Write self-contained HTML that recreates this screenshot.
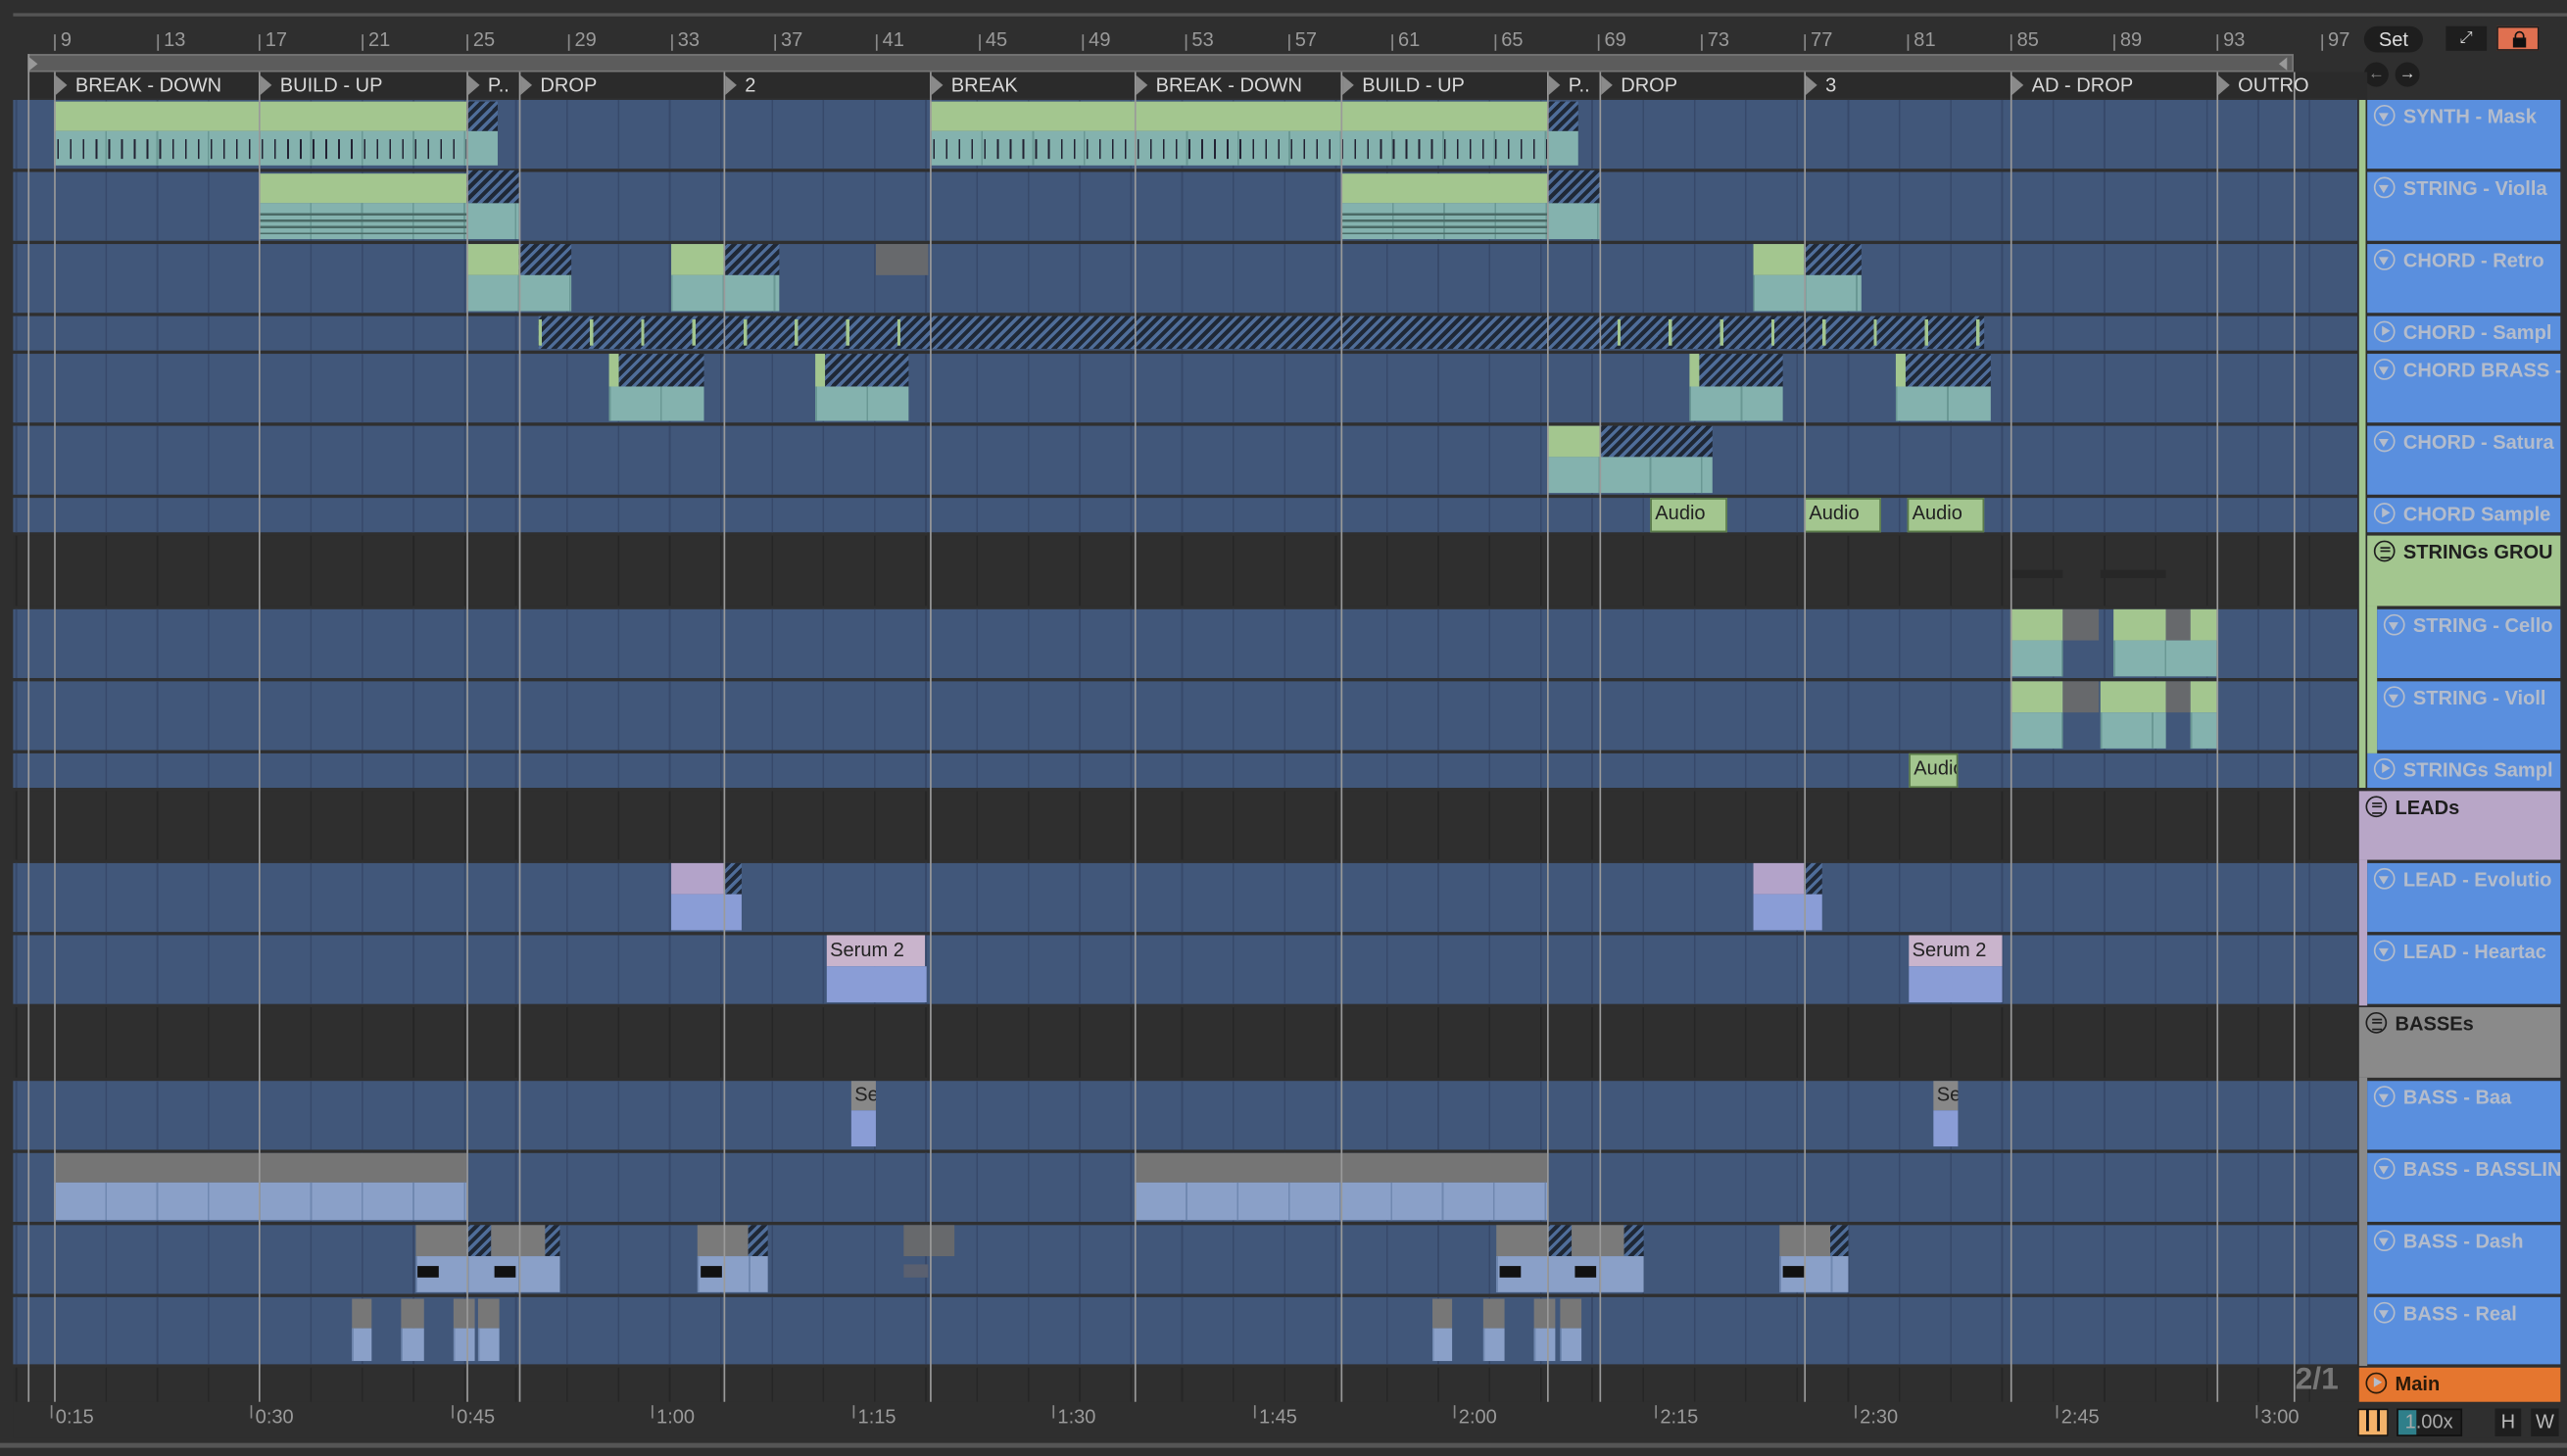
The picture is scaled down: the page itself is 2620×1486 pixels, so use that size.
<!DOCTYPE html>
<html><head><meta charset="utf-8"><style>
*{margin:0;padding:0;box-sizing:border-box}
html,body{width:2620px;height:1486px;overflow:hidden;background:#2a2a2a}
#w{position:absolute;left:0;top:0;width:1568px;height:889px;transform-origin:0 0;transform:scale(1.67092,1.67154);background:#2f2f2f;font-family:"Liberation Sans",sans-serif;overflow:hidden}
.a{position:absolute}
.lane{position:absolute;left:8px;width:1432px;background-color:#41577a;background-image:repeating-linear-gradient(90deg,#37496a 0 1px,transparent 1px 31.3px);background-position:25px 0}
.dk{background-color:#2f2f2f;background-image:repeating-linear-gradient(90deg,#262626 0 1px,transparent 1px 31.3px)}
.g{position:absolute;background:#a3c68f}
.t{position:absolute;background-color:#84b2ae;background-image:repeating-linear-gradient(90deg,#6a9894 0 1px,transparent 1px 31.3px)}
.h{position:absolute;background:repeating-linear-gradient(-45deg,#1f2836 0 2.5px,#4f6d99 2.5px 4.5px)}
.gr{position:absolute;background:#67696c}
.hd{position:absolute;left:1446px;width:118px;background:#5a8fde;color:#b4bccb;font-weight:bold;font-size:12px;padding:3px 0 0 22px;white-space:nowrap;overflow:hidden}
.hd i{position:absolute;left:4px;top:3px;width:13px;height:13px;border:1.3px solid #b4bccb;border-radius:50%}
.hd i:after{content:"";position:absolute;left:2px;top:3.5px;border-left:3.5px solid transparent;border-right:3.5px solid transparent;border-top:5px solid #b4bccb}
.hd i.p:after{left:3.5px;top:2px;border-top:3.5px solid transparent;border-bottom:3.5px solid transparent;border-left:5px solid #b4bccb;border-right:0}
.hd i.m:after{content:"";left:2.5px;top:2.5px;width:6px;height:5px;border:0;border-top:1.3px solid #1e1e1e;border-bottom:1.3px solid #1e1e1e;background:linear-gradient(#1e1e1e,#1e1e1e) center/100% 1.3px no-repeat}
.loc{position:absolute;top:44px;width:1px;height:812px;background:#9a9a9a}
.lb{position:absolute;top:45px;color:#d8d8d8;font-size:12px;padding-left:13px;white-space:nowrap}
.lb:before{content:"";position:absolute;left:1px;top:1px;border-top:6px solid transparent;border-bottom:6px solid transparent;border-left:7px solid #8a8a8a}
.rn{position:absolute;top:17px;color:#9a9a9a;font-size:12px;padding-left:4px}
.rn:before{content:"";position:absolute;left:0;top:4px;width:1px;height:10px;background:#888}
.tm{position:absolute;top:858px;color:#9a9a9a;font-size:12px;padding-left:3px}
.tm:before{content:"";position:absolute;left:0;top:0;width:1px;height:8px;background:#888}
.au{position:absolute;background:#a3c68f;border:1px solid #5a7a4a;color:#222;font-size:12px;padding:1px 0 0 2px;height:21px;overflow:hidden}
.pu{position:absolute;background:#b3a3c9}
.bl{position:absolute;background:#8a9dd6}
.lb2{position:absolute;background-color:#8aa0c8;background-image:repeating-linear-gradient(90deg,#7088b0 0 1px,transparent 1px 31.3px)}
</style></head><body><div id="w">
<div class="a" style="left:8px;top:8px;width:1560px;height:2px;background:#555"></div>
<div class="a" style="left:17px;top:33px;width:1384px;height:11px;background:#5c5c5c;border:1px solid #777"></div>
<div class="a" style="left:17px;top:44px;width:1423px;height:16px;background:#2b2b2b"></div>
<div class="a" style="left:18px;top:35px;border-top:4px solid transparent;border-bottom:4px solid transparent;border-left:5px solid #999"></div>
<div class="a" style="left:1392px;top:35px;border-top:4px solid transparent;border-bottom:4px solid transparent;border-right:5px solid #999"></div>
<div class="rn" style="left:33px">9</div><div class="rn" style="left:96px">13</div><div class="rn" style="left:158px">17</div><div class="rn" style="left:221px">21</div><div class="rn" style="left:285px">25</div><div class="rn" style="left:347px">29</div><div class="rn" style="left:410px">33</div><div class="rn" style="left:473px">37</div><div class="rn" style="left:535px">41</div><div class="rn" style="left:598px">45</div><div class="rn" style="left:661px">49</div><div class="rn" style="left:724px">53</div><div class="rn" style="left:787px">57</div><div class="rn" style="left:850px">61</div><div class="rn" style="left:913px">65</div><div class="rn" style="left:976px">69</div><div class="rn" style="left:1039px">73</div><div class="rn" style="left:1102px">77</div><div class="rn" style="left:1165px">81</div><div class="rn" style="left:1228px">85</div><div class="rn" style="left:1291px">89</div><div class="rn" style="left:1354px">93</div><div class="rn" style="left:1418px">97</div>
<div class="a" style="left:1444px;top:16px;width:36px;height:16px;border-radius:8px;background:#1e1e1e;color:#ddd;font-size:12px;text-align:center;line-height:16px">Set</div>
<div class="a" style="left:1494px;top:16px;width:25px;height:15px;background:#1e1e1e;color:#ddd;font-size:10px;text-align:center;line-height:15px">⤢</div>
<div class="a" style="left:1525px;top:16px;width:26px;height:15px;background:#e07050;border:1px solid #1e1e1e"><div class="a" style="left:9px;top:6px;width:8px;height:6px;background:#111"></div><div class="a" style="left:10px;top:2px;width:6px;height:6px;border:1.5px solid #111;border-radius:3px 3px 0 0"></div></div>
<div class="a" style="left:1444px;top:38px;width:15px;height:15px;border-radius:50%;background:#1e1e1e;color:#888;font-size:10px;text-align:center;line-height:15px">←</div>
<div class="a" style="left:1463px;top:38px;width:15px;height:15px;border-radius:50%;background:#1e1e1e;color:#ddd;font-size:10px;text-align:center;line-height:15px">→</div>
<div class="lane" style="top:61px;height:42px"></div>
<div class="lane" style="top:105px;height:42px"></div>
<div class="lane" style="top:149px;height:42px"></div>
<div class="lane" style="top:193px;height:21px"></div>
<div class="lane" style="top:216px;height:42px"></div>
<div class="lane" style="top:260px;height:42px"></div>
<div class="lane" style="top:304px;height:21px"></div>
<div class="lane dk" style="top:327px;height:43px"></div>
<div class="lane" style="top:372px;height:42px"></div>
<div class="lane" style="top:416px;height:42px"></div>
<div class="lane" style="top:460px;height:21px"></div>
<div class="lane dk" style="top:483px;height:42px"></div>
<div class="lane" style="top:527px;height:42px"></div>
<div class="lane" style="top:571px;height:42px"></div>
<div class="lane dk" style="top:615px;height:43px"></div>
<div class="lane" style="top:660px;height:42px"></div>
<div class="lane" style="top:704px;height:42px"></div>
<div class="lane" style="top:748px;height:42px"></div>
<div class="lane" style="top:792px;height:41px"></div>
<div class="lane dk" style="top:835px;height:21px"></div>
<div class="g" style="left:33px;top:62px;width:252px;height:18px"></div>
<div class="t" style="left:33px;top:80px;width:271px;height:21px"></div>
<div class="a" style="left:35px;top:85px;width:250px;height:12px;background:repeating-linear-gradient(90deg,#223 0 1px,transparent 1px 7.8px)"></div>
<div class="h" style="left:285px;top:62px;width:19px;height:18px"></div>
<div class="g" style="left:568px;top:62px;width:377px;height:18px"></div>
<div class="t" style="left:568px;top:80px;width:396px;height:21px"></div>
<div class="a" style="left:570px;top:85px;width:375px;height:12px;background:repeating-linear-gradient(90deg,#223 0 1px,transparent 1px 7.8px)"></div>
<div class="h" style="left:945px;top:62px;width:19px;height:18px"></div>
<div class="g" style="left:158px;top:106px;width:127px;height:18px"></div>
<div class="t" style="left:158px;top:124px;width:159px;height:22px"></div>
<div class="a" style="left:158px;top:130px;width:127px;height:13px;background:repeating-linear-gradient(180deg,#4a6a66 0 1.5px,transparent 1.5px 4px)"></div>
<div class="h" style="left:285px;top:104px;width:32px;height:20px"></div>
<div class="g" style="left:819px;top:106px;width:126px;height:18px"></div>
<div class="t" style="left:819px;top:124px;width:158px;height:22px"></div>
<div class="a" style="left:819px;top:130px;width:126px;height:13px;background:repeating-linear-gradient(180deg,#4a6a66 0 1.5px,transparent 1.5px 4px)"></div>
<div class="h" style="left:945px;top:104px;width:32px;height:20px"></div>
<div class="g" style="left:285px;top:149px;width:32px;height:19px"></div><div class="h" style="left:317px;top:149px;width:32px;height:19px"></div><div class="t" style="left:285px;top:168px;width:64px;height:22px"></div>
<div class="g" style="left:410px;top:149px;width:32px;height:19px"></div><div class="h" style="left:442px;top:149px;width:34px;height:19px"></div><div class="t" style="left:410px;top:168px;width:66px;height:22px"></div>
<div class="gr" style="left:535px;top:149px;width:32px;height:19px"></div>
<div class="g" style="left:1071px;top:149px;width:31px;height:19px"></div><div class="h" style="left:1102px;top:149px;width:35px;height:19px"></div><div class="t" style="left:1071px;top:168px;width:66px;height:22px"></div>
<div class="h" style="left:329px;top:193px;width:883px;height:20px"></div>
<div class="a" style="left:329px;top:195px;width:225px;height:16px;background:repeating-linear-gradient(90deg,#a3c68f 0 2px,transparent 2px 31.3px)"></div>
<div class="a" style="left:988px;top:195px;width:224px;height:16px;background:repeating-linear-gradient(90deg,#a3c68f 0 2px,transparent 2px 31.3px)"></div>
<div class="g" style="left:372px;top:216px;width:6px;height:20px"></div><div class="h" style="left:378px;top:216px;width:52px;height:20px"></div><div class="t" style="left:372px;top:236px;width:58px;height:21px"></div>
<div class="g" style="left:498px;top:216px;width:6px;height:20px"></div><div class="h" style="left:504px;top:216px;width:51px;height:20px"></div><div class="t" style="left:498px;top:236px;width:57px;height:21px"></div>
<div class="g" style="left:1032px;top:216px;width:6px;height:20px"></div><div class="h" style="left:1038px;top:216px;width:51px;height:20px"></div><div class="t" style="left:1032px;top:236px;width:57px;height:21px"></div>
<div class="g" style="left:1158px;top:216px;width:6px;height:20px"></div><div class="h" style="left:1164px;top:216px;width:52px;height:20px"></div><div class="t" style="left:1158px;top:236px;width:58px;height:21px"></div>
<div class="g" style="left:945px;top:260px;width:32px;height:19px"></div><div class="h" style="left:977px;top:260px;width:69px;height:19px"></div><div class="t" style="left:945px;top:279px;width:101px;height:22px"></div>
<div class="au" style="left:1008px;top:304px;width:47px">Audio</div>
<div class="au" style="left:1102px;top:304px;width:47px">Audio</div>
<div class="au" style="left:1165px;top:304px;width:47px">Audio</div>
<div class="a" style="left:1228px;top:348px;width:32px;height:5px;background:#272727"></div><div class="a" style="left:1283px;top:348px;width:40px;height:5px;background:#272727"></div>
<div class="g" style="left:1228px;top:372px;width:32px;height:19px"></div><div class="gr" style="left:1260px;top:372px;width:22px;height:19px"></div><div class="g" style="left:1291px;top:372px;width:32px;height:19px"></div><div class="gr" style="left:1323px;top:372px;width:15px;height:19px"></div><div class="g" style="left:1338px;top:372px;width:16px;height:19px"></div>
<div class="t" style="left:1228px;top:391px;width:32px;height:22px"></div><div class="t" style="left:1291px;top:391px;width:63px;height:22px"></div>
<div class="g" style="left:1228px;top:416px;width:32px;height:19px"></div><div class="gr" style="left:1260px;top:416px;width:22px;height:19px"></div><div class="g" style="left:1283px;top:416px;width:40px;height:19px"></div><div class="gr" style="left:1323px;top:416px;width:15px;height:19px"></div><div class="g" style="left:1338px;top:416px;width:16px;height:19px"></div>
<div class="t" style="left:1228px;top:435px;width:32px;height:22px"></div><div class="t" style="left:1283px;top:435px;width:40px;height:22px"></div><div class="t" style="left:1338px;top:435px;width:16px;height:22px"></div>
<div class="au" style="left:1166px;top:460px;width:30px">Audio</div>
<div class="pu" style="left:410px;top:527px;width:32px;height:19px"></div><div class="h" style="left:442px;top:527px;width:11px;height:19px"></div><div class="bl" style="left:410px;top:546px;width:43px;height:22px"></div>
<div class="pu" style="left:1071px;top:527px;width:31px;height:19px"></div><div class="h" style="left:1102px;top:527px;width:11px;height:19px"></div><div class="bl" style="left:1071px;top:546px;width:42px;height:22px"></div>
<div class="pu" style="left:505px;top:571px;width:60px;height:19px;background:#c9b4cc;color:#222;font-size:12px;padding:2px 0 0 2px">Serum 2</div><div class="bl" style="left:505px;top:590px;width:61px;height:22px"></div>
<div class="pu" style="left:1166px;top:571px;width:57px;height:19px;background:#c9b4cc;color:#222;font-size:12px;padding:2px 0 0 2px">Serum 2</div><div class="bl" style="left:1166px;top:590px;width:57px;height:22px"></div>
<div class="gr" style="left:520px;top:660px;width:15px;height:18px;background:#888;color:#222;font-size:12px;padding:1px 0 0 2px;overflow:hidden">Se</div><div class="bl" style="left:520px;top:678px;width:15px;height:22px"></div>
<div class="gr" style="left:1181px;top:660px;width:15px;height:18px;background:#888;color:#222;font-size:12px;padding:1px 0 0 2px;overflow:hidden">Se</div><div class="bl" style="left:1181px;top:678px;width:15px;height:22px"></div>
<div class="gr" style="left:33px;top:704px;width:252px;height:18px;background:#757575"></div><div class="lb2" style="left:33px;top:722px;width:252px;height:23px"></div>
<div class="gr" style="left:693px;top:704px;width:252px;height:18px;background:#757575"></div><div class="lb2" style="left:693px;top:722px;width:252px;height:23px"></div>
<div class="gr" style="left:254px;top:748px;width:31px;height:19px;background:#7a7a7a"></div><div class="h" style="left:285px;top:748px;width:15px;height:19px"></div><div class="gr" style="left:300px;top:748px;width:33px;height:19px;background:#7a7a7a"></div><div class="h" style="left:333px;top:748px;width:9px;height:19px"></div><div class="lb2" style="left:254px;top:767px;width:88px;height:22px"></div>
<div class="gr" style="left:426px;top:748px;width:31px;height:19px;background:#7a7a7a"></div><div class="h" style="left:457px;top:748px;width:12px;height:19px"></div><div class="lb2" style="left:426px;top:767px;width:43px;height:22px"></div>
<div class="gr" style="left:552px;top:748px;width:31px;height:19px"></div><div class="a" style="left:552px;top:772px;width:15px;height:8px;background:#5a6070"></div>
<div class="gr" style="left:914px;top:748px;width:31px;height:19px;background:#7a7a7a"></div><div class="h" style="left:945px;top:748px;width:15px;height:19px"></div><div class="gr" style="left:960px;top:748px;width:32px;height:19px;background:#7a7a7a"></div><div class="h" style="left:992px;top:748px;width:12px;height:19px"></div><div class="lb2" style="left:914px;top:767px;width:90px;height:22px"></div>
<div class="gr" style="left:1087px;top:748px;width:31px;height:19px;background:#7a7a7a"></div><div class="h" style="left:1118px;top:748px;width:11px;height:19px"></div><div class="lb2" style="left:1087px;top:767px;width:42px;height:22px"></div>
<div class="a" style="left:255px;top:773px;width:13px;height:7px;background:#111"></div><div class="a" style="left:302px;top:773px;width:13px;height:7px;background:#111"></div><div class="a" style="left:428px;top:773px;width:13px;height:7px;background:#111"></div><div class="a" style="left:916px;top:773px;width:13px;height:7px;background:#111"></div><div class="a" style="left:962px;top:773px;width:13px;height:7px;background:#111"></div><div class="a" style="left:1089px;top:773px;width:13px;height:7px;background:#111"></div>
<div class="gr" style="left:215px;top:793px;width:12px;height:18px;background:#777"></div><div class="lb2" style="left:215px;top:811px;width:12px;height:20px"></div>
<div class="gr" style="left:245px;top:793px;width:14px;height:18px;background:#777"></div><div class="lb2" style="left:245px;top:811px;width:14px;height:20px"></div>
<div class="gr" style="left:277px;top:793px;width:13px;height:18px;background:#777"></div><div class="lb2" style="left:277px;top:811px;width:13px;height:20px"></div>
<div class="gr" style="left:292px;top:793px;width:13px;height:18px;background:#777"></div><div class="lb2" style="left:292px;top:811px;width:13px;height:20px"></div>
<div class="gr" style="left:875px;top:793px;width:12px;height:18px;background:#777"></div><div class="lb2" style="left:875px;top:811px;width:12px;height:20px"></div>
<div class="gr" style="left:906px;top:793px;width:13px;height:18px;background:#777"></div><div class="lb2" style="left:906px;top:811px;width:13px;height:20px"></div>
<div class="gr" style="left:937px;top:793px;width:13px;height:18px;background:#777"></div><div class="lb2" style="left:937px;top:811px;width:13px;height:20px"></div>
<div class="gr" style="left:953px;top:793px;width:13px;height:18px;background:#777"></div><div class="lb2" style="left:953px;top:811px;width:13px;height:20px"></div>
<div class="loc" style="left:33px"></div><div class="loc" style="left:158px"></div><div class="loc" style="left:285px"></div><div class="loc" style="left:317px"></div><div class="loc" style="left:442px"></div><div class="loc" style="left:568px"></div><div class="loc" style="left:693px"></div><div class="loc" style="left:819px"></div><div class="loc" style="left:945px"></div><div class="loc" style="left:977px"></div><div class="loc" style="left:1102px"></div><div class="loc" style="left:1228px"></div><div class="loc" style="left:1354px"></div><div class="loc" style="left:1401px"></div><div class="loc" style="left:17px;top:33px;height:823px"></div>
<div class="lb" style="left:33px">BREAK - DOWN</div><div class="lb" style="left:158px">BUILD - UP</div><div class="lb" style="left:285px">P..</div><div class="lb" style="left:317px">DROP</div><div class="lb" style="left:442px">2</div><div class="lb" style="left:568px">BREAK</div><div class="lb" style="left:693px">BREAK - DOWN</div><div class="lb" style="left:819px">BUILD - UP</div><div class="lb" style="left:945px">P..</div><div class="lb" style="left:977px">DROP</div><div class="lb" style="left:1102px">3</div><div class="lb" style="left:1228px">AD - DROP</div><div class="lb" style="left:1354px">OUTRO</div>
<div class="a" style="left:1440px;top:44px;width:6px;height:792px;background:#2b2b2b"></div>
<div class="a" style="left:1441px;top:61px;width:4px;height:420px;background:#a3c68f"></div>
<div class="hd" style="top:61px;height:42px"><i></i>SYNTH - Mask</div>
<div class="hd" style="top:105px;height:42px"><i></i>STRING - Violla</div>
<div class="hd" style="top:149px;height:42px"><i></i>CHORD - Retro</div>
<div class="hd" style="top:193px;height:21px"><i class="p"></i>CHORD - Sampl</div>
<div class="hd" style="top:216px;height:42px"><i></i>CHORD BRASS -</div>
<div class="hd" style="top:260px;height:42px"><i></i>CHORD - Satura</div>
<div class="hd" style="top:304px;height:21px"><i class="p"></i>CHORD Sample</div>
<div class="hd" style="top:327px;height:43px;background:#a3c68f;color:#1e1e1e"><i class="m" style="border-color:#1e1e1e"></i>STRINGs GROU</div>
<div class="a" style="left:1446px;top:370px;width:6px;height:90px;background:#a3c68f"></div>
<div class="hd" style="left:1452px;width:112px;top:372px;height:42px"><i></i>STRING - Cello</div>
<div class="hd" style="left:1452px;width:112px;top:416px;height:42px"><i></i>STRING - Violl</div>
<div class="hd" style="top:460px;height:21px"><i class="p"></i>STRINGs Sampl</div>
<div class="hd" style="left:1441px;width:123px;top:483px;height:42px;background:#b8a6c7;color:#1e1e1e"><i class="m" style="border-color:#1e1e1e"></i>LEADs</div>
<div class="a" style="left:1441px;top:525px;width:5px;height:89px;background:#b8a6c7"></div>
<div class="hd" style="top:527px;height:42px"><i></i>LEAD - Evolutio</div>
<div class="hd" style="top:571px;height:42px"><i></i>LEAD - Heartac</div>
<div class="hd" style="left:1441px;width:123px;top:615px;height:43px;background:#8a8a8a;color:#1e1e1e"><i class="m" style="border-color:#1e1e1e"></i>BASSEs</div>
<div class="a" style="left:1441px;top:658px;width:5px;height:176px;background:#8a8a8a"></div>
<div class="hd" style="top:660px;height:42px"><i></i>BASS - Baa</div>
<div class="hd" style="top:704px;height:42px"><i></i>BASS - BASSLIN</div>
<div class="hd" style="top:748px;height:42px"><i></i>BASS - Dash</div>
<div class="hd" style="top:792px;height:41px"><i></i>BASS - Real</div>
<div class="hd" style="left:1441px;width:123px;top:835px;height:21px;background:#e5762f;color:#2a1a0a;font-size:12px"><i class="p" style="border-color:#2a1a0a"></i>Main</div>
<div class="a" style="left:1402px;top:832px;color:#777;font-size:19px;font-weight:bold">2/1</div>
<div class="a" style="left:8px;top:856px;width:1560px;height:22px;background:#2f2f2f"></div>
<div class="tm" style="left:31px">0:15</div><div class="tm" style="left:153px">0:30</div><div class="tm" style="left:276px">0:45</div><div class="tm" style="left:398px">1:00</div><div class="tm" style="left:521px">1:15</div><div class="tm" style="left:643px">1:30</div><div class="tm" style="left:766px">1:45</div><div class="tm" style="left:888px">2:00</div><div class="tm" style="left:1011px">2:15</div><div class="tm" style="left:1133px">2:30</div><div class="tm" style="left:1256px">2:45</div><div class="tm" style="left:1378px">3:00</div>
<div class="a" style="left:1440px;top:860px;width:19px;height:17px;background:#f4b26a;border:1px solid #111;color:#111;font-size:11px;text-align:center;line-height:15px">┃┃</div>
<div class="a" style="left:1464px;top:860px;width:40px;height:17px;background:#1e1e1e;border:1px solid #111"><div class="a" style="left:0;top:0;width:11px;height:15px;background:#2f7f8a"></div><div class="a" style="left:4px;top:0;color:#aaa;font-size:12px;line-height:15px">1.00x</div></div>
<div class="a" style="left:1524px;top:860px;width:16px;height:17px;background:#1e1e1e;color:#bbb;font-size:12px;text-align:center;line-height:17px">H</div>
<div class="a" style="left:1546px;top:860px;width:17px;height:17px;background:#1e1e1e;color:#bbb;font-size:12px;text-align:center;line-height:17px">W</div>
<div class="a" style="left:0;top:881px;width:1568px;height:3px;background:#555"></div>
</div></body></html>
